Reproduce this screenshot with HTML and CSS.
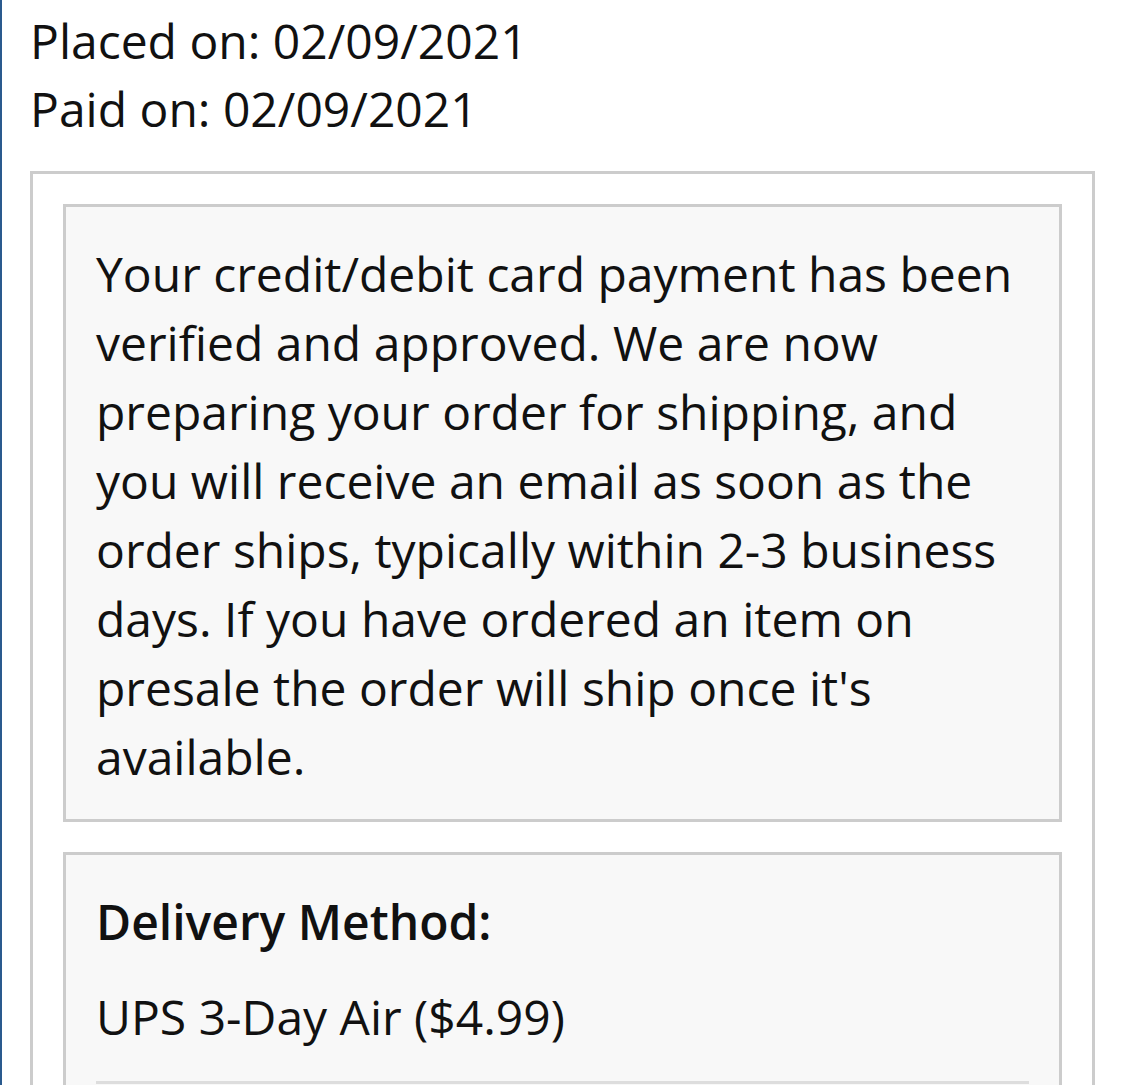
FILE: index.html
```html
<!DOCTYPE html>
<html lang="en">
<head>
  <meta charset="UTF-8">
  <title>Order Details</title>
  <link rel="stylesheet" href="styles.css">
</head>
<body>

  <div class="order">
    <div class="dates">
      <p>Placed on: 02/09/2021</p>
      <p>Paid on: 02/09/2021</p>
    </div>

    <div class="panel">
      <div class="box">
        <p>Your credit/debit card payment has been verified and approved. We are now preparing your order for shipping, and you will receive an email as soon as the order ships, typically within 2-3 business days. If you have ordered an item on presale the order will ship once it's available.</p>
      </div>

      <div class="box">
        <h4>Delivery Method:</h4>
        <p>UPS 3-Day Air ($4.99)</p>
        <hr>
      </div>
    </div>
  </div>

</body>
</html>
```

FILE: styles.css
```css
body {
  margin: 0;
  font-family: 'Open Sans', sans-serif;
  color: #111;
  background: #fff;
  border-left: 2px solid #2a5a8e;
  min-height: 1085px;
}

.order {
  padding: 7px 30px 0 28px;
}

p {
  margin: 0;
}

.dates p {
  font-size: 48px;
  line-height: 68px;
}

.panel {
  margin-top: 28px;
  border: 3px solid #ccc;
  padding: 30px;
}

.box {
  background: #f8f8f8;
  border: 3px solid #ccc;
  padding: 32px 30px 28px;
  font-size: 48px;
  line-height: 69px;
}

.box + .box {
  margin-top: 30px;
}

.box h4 {
  margin: 0 0 26px;
  font-size: 48px;
  font-weight: 600;
}

.box hr {
  margin: 30px 0 0;
  border: 0;
  border-top: 3px solid #ddd;
}
```
